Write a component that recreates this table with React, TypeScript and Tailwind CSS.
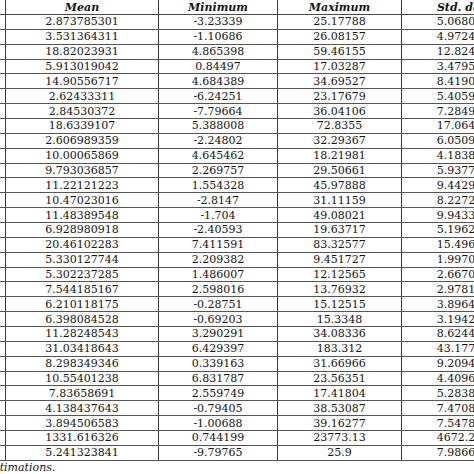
import React from "react";

const rows: [string, string, string, string][] = [
  ["2.873785301", "-3.23339", "25.17788", "5.068069"],
  ["3.531364311", "-1.10686", "26.08157", "4.972412"],
  ["18.82023931", "4.865398", "59.46155", "12.82416"],
  ["5.913019042", "0.84497", "17.03287", "3.479503"],
  ["14.90556717", "4.684389", "34.69527", "8.419061"],
  ["2.62433311", "-6.24251", "23.17679", "5.405962"],
  ["2.84530372", "-7.79664", "36.04106", "7.284967"],
  ["18.6339107", "5.388008", "72.8355", "17.06423"],
  ["2.606989359", "-2.24802", "32.29367", "6.050926"],
  ["10.00065869", "4.645462", "18.21981", "4.183827"],
  ["9.793036857", "2.269757", "29.50661", "5.937714"],
  ["11.22121223", "1.554328", "45.97888", "9.442915"],
  ["10.47023016", "-2.8147", "31.11159", "8.227206"],
  ["11.48389548", "-1.704", "49.08021", "9.943317"],
  ["6.928980918", "-2.40593", "19.63717", "5.196208"],
  ["20.46102283", "7.411591", "83.32577", "15.49641"],
  ["5.330127744", "2.209382", "9.451727", "1.997006"],
  ["5.302237285", "1.486007", "12.12565", "2.667006"],
  ["7.544185167", "2.598016", "13.76932", "2.978112"],
  ["6.210118175", "-0.28751", "15.12515", "3.896428"],
  ["6.398084528", "-0.69203", "15.3348", "3.194208"],
  ["11.28248543", "3.290291", "34.08336", "8.624418"],
  ["31.03418643", "6.429397", "183.312", "43.17726"],
  ["8.298349346", "0.339163", "31.66966", "9.209417"],
  ["10.55401238", "6.831787", "23.56351", "4.409663"],
  ["7.83658691", "2.559749", "17.41804", "5.283846"],
  ["4.138437643", "-0.79405", "38.53087", "7.470842"],
  ["3.894506583", "-1.00688", "39.16277", "7.547838"],
  ["1331.616326", "0.744199", "23773.13", "4672.216"],
  ["5.241323841", "-9.79765", "25.9", "7.986642"],
];

const font = { fontFamily: '"DejaVu Serif", serif' };

export default function App() {
  return (
    <div
      className="w-[474px] h-[474px] overflow-hidden bg-white text-[#141414] text-[11px] leading-none"
      style={font}
    >
      <div className="w-[530px]">
        <div className="grid grid-cols-[6px_153px_119px_124px_122px] h-[15px] border-b border-[#4a4a4a] font-bold italic">
          <div className="border-r border-[#3a3a3a]" />
          <div className="border-r border-[#3a3a3a] flex items-center justify-center">Mean</div>
          <div className="border-r border-[#3a3a3a] flex items-center justify-center">Minimum</div>
          <div className="border-r border-[#3a3a3a] flex items-center justify-center">Maximum</div>
          <div className="flex items-center justify-center">Std. dev.</div>
        </div>
        {rows.map((r, i) => (
          <div
            key={i}
            className="grid grid-cols-[6px_153px_119px_124px_122px] h-[14.866px] border-b border-[#555555]"
          >
            <div className="border-r border-[#3a3a3a]" />
            <div className="border-r border-[#3a3a3a] flex items-center justify-center">{r[0]}</div>
            <div className="border-r border-[#3a3a3a] flex items-center justify-center">{r[1]}</div>
            <div className="border-r border-[#3a3a3a] flex items-center justify-center">{r[2]}</div>
            <div className="flex items-center justify-center">{r[3]}</div>
          </div>
        ))}
        <div className="mt-[1px] italic whitespace-nowrap -ml-[14px] text-[11px]">Estimations.</div>
      </div>
    </div>
  );
}
